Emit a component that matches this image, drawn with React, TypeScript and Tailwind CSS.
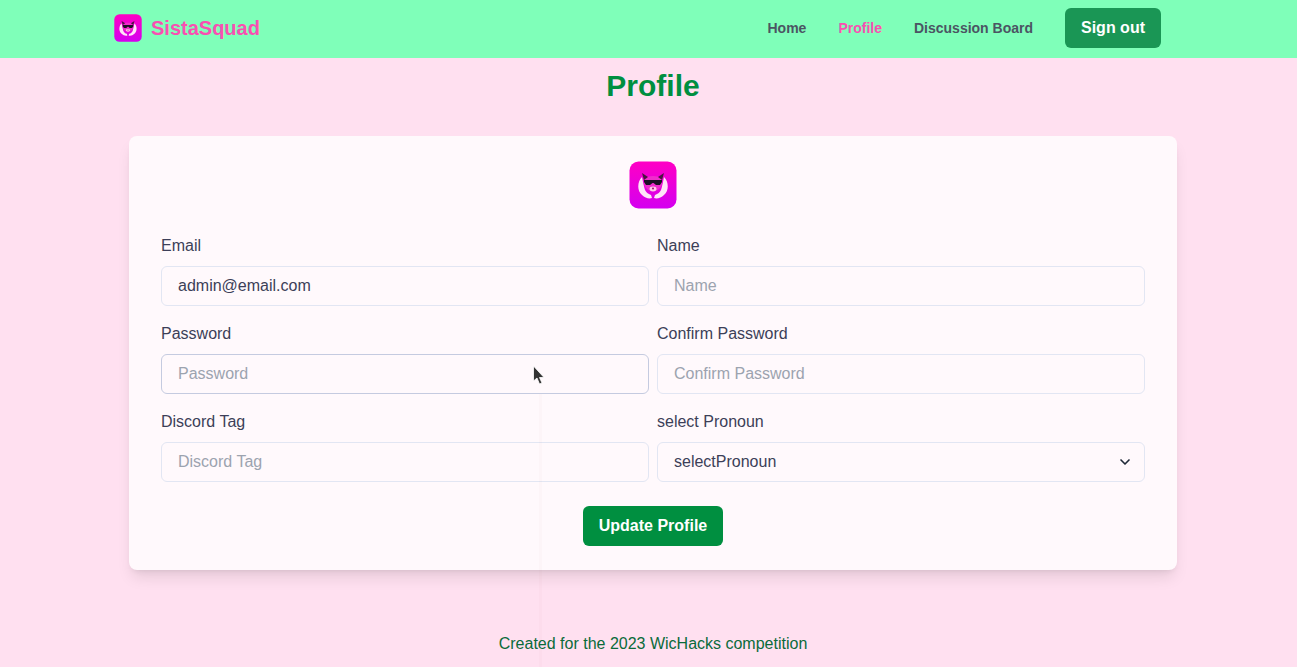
import { ChevronDown } from "lucide-react";

function Logo({ size, id }: { size: number; id: string }) {
  return (
    <svg width={size} height={size} viewBox="0 0 48 48" className="block">
      <defs>
        <linearGradient id={id} x1="0" y1="0" x2="0" y2="1">
          <stop offset="0" stopColor="#ff00c4" />
          <stop offset="1" stopColor="#d400f0" />
        </linearGradient>
      </defs>
      <rect x="0.5" y="0.5" width="47" height="47" rx="9" fill={`url(#${id})`} />
      {/* arms */}
      <path d="M13 16 C8 21 8 30 13 34 C16 37 20 38 23 37 L22 34 C19 33 17 31 16 29 C15 26 14 21 13 16 Z" fill="#ffe4f8" />
      <path d="M35 16 C40 21 40 30 35 34 C32 37 28 38 25 37 L26 34 C29 33 31 31 32 29 C33 26 34 21 35 16 Z" fill="#ffe4f8" />
      {/* head */}
      <path d="M15 18 C18 14 30 14 33 18 C34 24 31 30 24 30 C17 30 14 24 15 18 Z" fill="#f02ccc" />
      {/* ears */}
      <path d="M13 12 L19 16 L15 19 Z" fill="#4a1440" />
      <path d="M35 12 L29 16 L33 19 Z" fill="#4a1440" />
      {/* glasses */}
      <path d="M15 19 H33 V21 L31 24 H27 L24.5 22 H23.5 L21 24 H17 L15 21 Z" fill="#1c1024" />
      {/* nose */}
      <ellipse cx="24" cy="28" rx="3.5" ry="2.4" fill="#ffc8ea" />
      <circle cx="24" cy="27.5" r="1" fill="#a01070" />
    </svg>
  );
}

function Field({ label, placeholder, value, hover }: { label: string; placeholder: string; value?: string; hover?: boolean }) {
  return (
    <div className="flex flex-col gap-2">
      <label className="text-base leading-6 text-[#3c3f58]">{label}</label>
      <input
        readOnly
        value={value ?? ""}
        placeholder={placeholder}
        className={`h-10 w-full rounded-md border bg-transparent px-4 text-base text-[#3c3f58] outline-none placeholder:text-[#9ca3af] ${hover ? "border-[#c5cbe0]" : "border-[#e2e6f3]"}`}
      />
    </div>
  );
}

export default function App() {
  return (
    <div className="relative min-h-[667px] overflow-hidden bg-[#ffe0f0] font-['Liberation_Sans',Arial,sans-serif]">
      <nav className="h-[58px] bg-[#7fffb9] pb-[2px] pl-[114px] pr-[136px] flex items-center justify-between">
        <div className="flex items-center gap-[9px]">
          <Logo size={28} id="logo-small" />
          <span className="text-xl font-bold text-[#f94fb1]">SistaSquad</span>
        </div>
        <div className="flex items-center">
          <a className="text-sm font-bold text-[#4b5563]">Home</a>
          <a className="ml-8 text-sm font-bold text-[#f94fb1]">Profile</a>
          <a className="ml-8 text-sm font-bold text-[#4b5563]">Discussion Board</a>
          <button className="ml-8 h-10 w-24 rounded-md bg-[#1a9655] text-base font-bold text-white">Sign out</button>
        </div>
      </nav>

      <main className="pl-[9px]">
        <h1 className="mt-[10px] text-center text-3xl font-bold text-[#008f40]">Profile</h1>

        <div className="mx-auto mt-8 w-[1048px] rounded-lg bg-[#fff9fc] px-8 pt-[25px] pb-6 shadow-lg">
          <div className="flex justify-center">
            <Logo size={48} id="logo-large" />
          </div>
          <div className="mt-[25px] grid grid-cols-2 gap-x-2 gap-y-4">
            <Field label="Email" placeholder="Email" value="admin@email.com" />
            <Field label="Name" placeholder="Name" />
            <Field label="Password" placeholder="Password" hover />
            <Field label="Confirm Password" placeholder="Confirm Password" />
            <Field label="Discord Tag" placeholder="Discord Tag" />
            <div className="flex flex-col gap-2">
              <label className="text-base leading-6 text-[#3c3f58]">select Pronoun</label>
              <div className="flex h-10 items-center justify-between rounded-md border border-[#e2e6f3] pl-4 pr-[11px] text-base text-[#3c3f58]">
                <span>selectPronoun</span>
                <ChevronDown size={16} strokeWidth={2.5} className="text-[#1f2937]" />
              </div>
            </div>
          </div>
          <div className="mt-6 flex justify-center">
            <button className="h-10 w-[140px] rounded-md bg-[#008f40] text-base font-bold text-white">Update Profile</button>
          </div>
        </div>

        <p className="mt-[62px] text-center text-base leading-6 text-[#0a6b3a]">Created for the 2023 WicHacks competition</p>
      </main>

      {/* mouse pointer and its faint trail, both lie over the page */}
      <div className="absolute left-[539px] top-[394px] bottom-0 w-[3px] bg-[#a0406006]" />
      <svg className="absolute left-[532px] top-[365px]" width="14" height="21" viewBox="0 0 14 21">
        <path d="M1.5 1 V16 L5 13 L7.5 19 L10 18 L7.5 12.5 L12 12.5 Z" fill="#333" stroke="#fff" strokeWidth="0.8" />
      </svg>
    </div>
  );
}
